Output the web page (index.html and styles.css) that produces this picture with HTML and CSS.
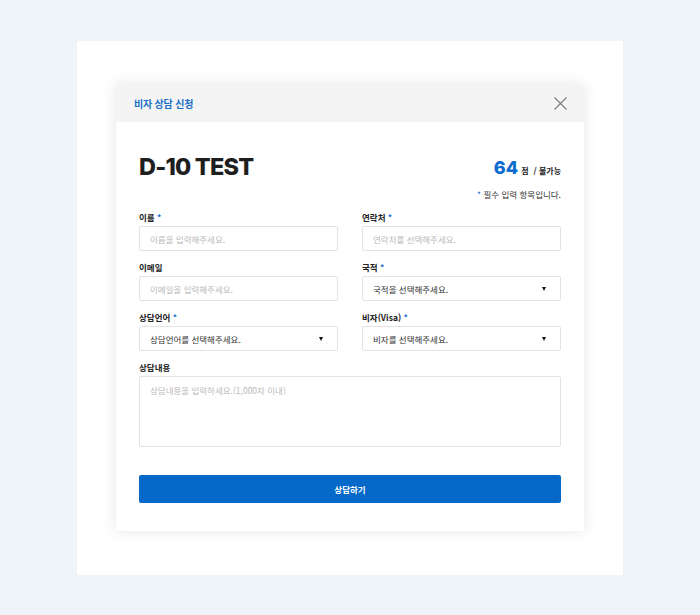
FILE: index.html
```html
<!DOCTYPE html>
<html lang="ko">
<head>
<meta charset="utf-8">
<link rel="stylesheet" href="styles.css">
</head>
<body>
<div class="panel">
  <div class="modal">
    <div class="modal-head">
      <span class="modal-title">비자 상담 신청</span>
      <button class="close" aria-label="닫기">
        <svg width="13" height="13" viewBox="0 0 13 13"><path d="M0.5 0.5 L12.5 12.5 M12.5 0.5 L0.5 12.5" stroke="#7a7a7a" stroke-width="1.1" fill="none"/></svg>
      </button>
    </div>
    <div class="modal-body">
      <div class="title-row">
        <h1 class="title">D-10 TEST</h1>
        <div class="score"><span class="num">64</span><span class="unit">점</span><span class="status">/ 불가능</span></div>
      </div>
      <p class="req-note"><span class="star">*</span> 필수 입력 항목입니다.</p>
      <div class="grid">
        <div class="field">
          <label class="label">이름 <span class="star">*</span></label>
          <div class="input placeholder">이름을 입력해주세요.</div>
        </div>
        <div class="field">
          <label class="label">연락처 <span class="star">*</span></label>
          <div class="input placeholder">연락처를 선택해주세요.</div>
        </div>
        <div class="field">
          <label class="label">이메일</label>
          <div class="input placeholder">이메일을 입력해주세요.</div>
        </div>
        <div class="field">
          <label class="label">국적 <span class="star">*</span></label>
          <div class="input select">국적을 선택해주세요.<span class="arrow"></span></div>
        </div>
        <div class="field">
          <label class="label">상담언어 <span class="star">*</span></label>
          <div class="input select">상담언어를 선택해주세요.<span class="arrow"></span></div>
        </div>
        <div class="field">
          <label class="label">비자(Visa) <span class="star">*</span></label>
          <div class="input select">비자를 선택해주세요.<span class="arrow"></span></div>
        </div>
        <div class="field full">
          <label class="label">상담내용</label>
          <div class="textarea placeholder">상담내용을 입력하세요.(1,000자 이내)</div>
        </div>
      </div>
      <button class="submit">상담하기</button>
    </div>
  </div>
</div>
</body>
</html>
```
FILE: styles.css
```css
* { box-sizing: border-box; }
html, body { margin: 0; padding: 0; }
body {
  background: #eff4f9;
  font-family: "Noto Sans CJK KR", "Noto Sans", sans-serif;
  color: #222;
  width: 700px;
  height: 615px;
  overflow: hidden;
}
.panel {
  margin: 41px 0 0 77px;
  width: 546px;
  height: 534px;
  background: #fff;
  padding: 43px 39px 0;
}
.modal {
  width: 468px;
  background: #fff;
  box-shadow: 0 0 14px rgba(0,0,0,0.10);
}
.modal-head {
  height: 38px;
  background: #f4f4f4;
  display: flex;
  align-items: center;
  justify-content: space-between;
  padding: 0 17px 0 18px;
}
.modal-title {
  font-size: 10px;
  font-weight: 700;
  color: #1b6fc6;
  letter-spacing: -0.2px;
}
.close {
  border: 0;
  background: none;
  padding: 0;
  width: 13px;
  height: 13px;
  display: flex;
}
.modal-body {
  padding: 30px 23px 28px;
}
.title-row {
  display: flex;
  justify-content: space-between;
  align-items: center;
  height: 30px;
}
.title {
  margin: 0;
  font-family: Inter, "Noto Sans", sans-serif;
  font-size: 23.5px;
  font-weight: 800;
  letter-spacing: -0.8px;
  color: #1e1e1e;
  line-height: 30px;
}
.score {
  display: flex;
  align-items: baseline;
}
.num {
  font-family: Inter, sans-serif;
  font-size: 18px;
  font-weight: 800;
  color: #0b6bcf;
  margin-right: 3px;
}
.unit {
  font-size: 8px;
  font-weight: 700;
  margin-right: 5px;
}
.status {
  font-size: 8px;
  font-weight: 700;
}
.req-note {
  margin: 6px 0 0;
  text-align: right;
  font-size: 8.5px;
  line-height: 12px;
  color: #333;
}
.star { color: #1b73d3; }
.grid {
  margin-top: 11px;
  display: grid;
  grid-template-columns: 1fr 1fr;
  column-gap: 24px;
  row-gap: 10px;
}
.field { display: flex; flex-direction: column; }
.field.full { grid-column: 1 / 3; }
.label {
  font-size: 8.5px;
  font-weight: 700;
  line-height: 12px;
  margin-bottom: 3px;
  color: #222;
}
.input {
  height: 25px;
  border: 1px solid #e3e3e3;
  border-radius: 2px;
  font-size: 8.5px;
  padding: 0 10px;
  display: flex;
  align-items: center;
  justify-content: space-between;
  color: #333;
}
.placeholder { color: #b9b9b9; }
.arrow {
  width: 0;
  height: 0;
  border-left: 2.5px solid transparent;
  border-right: 2.5px solid transparent;
  border-top: 4px solid #111;
  margin-right: 4px;
}
.textarea {
  height: 71px;
  border: 1px solid #e3e3e3;
  border-radius: 2px;
  font-size: 8.5px;
  padding: 7px 10px;
}
.submit {
  margin-top: 28px;
  width: 100%;
  height: 28px;
  border: 0;
  border-radius: 2px;
  background: #0668c9;
  color: #fff;
  font-family: "Noto Sans CJK KR", sans-serif;
  font-size: 8.5px;
  font-weight: 700;
}
```
